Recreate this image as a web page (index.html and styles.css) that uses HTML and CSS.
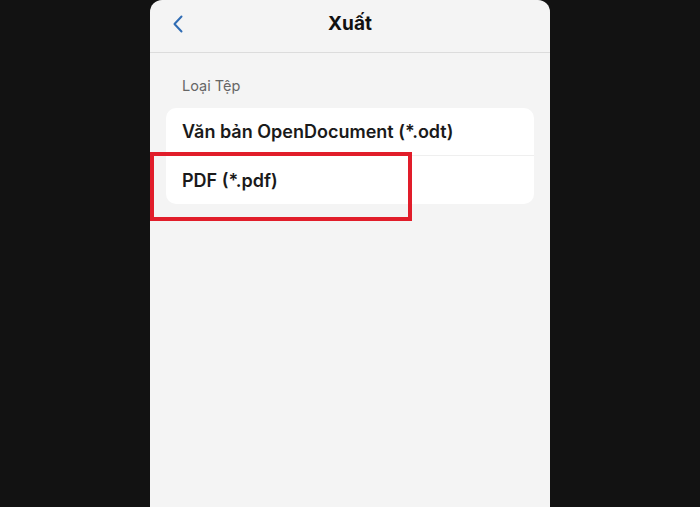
FILE: index.html
```html
<!DOCTYPE html>
<html lang="vi">
<head>
<meta charset="utf-8">
<link rel="stylesheet" href="styles.css">
</head>
<body>
<div class="phone">
  <header class="nav">
    <span class="back">
      <svg width="12" height="18" viewBox="0 0 12 18"><path d="M9.5 1.5 L2.5 9 L9.5 16.5" fill="none" stroke="#2f6cb4" stroke-width="2" stroke-linecap="round" stroke-linejoin="round"/></svg>
    </span>
    <h1 class="title">Xuất</h1>
    <span></span>
  </header>
  <main class="content">
    <div class="label">Loại Tệp</div>
    <div class="card">
      <div class="row">Văn bản OpenDocument (*.odt)</div>
      <div class="row">PDF (*.pdf)</div>
    </div>
  </main>
  <div class="highlight"></div>
</div>
</body>
</html>
```
FILE: styles.css
```css
html, body {
  margin: 0;
  height: 100%;
  background: #121212;
  overflow: hidden;
}
body {
  display: flex;
  justify-content: center;
  font-family: Inter, "Noto Sans", sans-serif;
}
.phone {
  position: relative;
  width: 400px;
  height: 100%;
  background: #f4f4f4;
  border-radius: 12px 12px 0 0;
}
.nav {
  height: 52px;
  border-bottom: 1px solid #dcdcdc;
  display: grid;
  grid-template-columns: 60px 1fr 60px;
  align-items: center;
}
.back {
  display: flex;
  padding-left: 22px;
  padding-bottom: 4px;
}
.title {
  margin: 0;
  text-align: center;
  font-size: 19px;
  font-weight: 700;
  color: #111;
  padding-bottom: 6px;
}
.content {
  padding: 0 16px;
}
.label {
  margin: 24px 0 13px 16px;
  font-size: 14.5px;
  line-height: 18px;
  color: #666;
}
.card {
  background: #fff;
  border-radius: 10px;
}
.row {
  height: 47px;
  display: flex;
  align-items: center;
  padding-left: 16px;
  font-size: 18px;
  font-weight: 600;
  color: #1a1a1a;
}
.row + .row {
  border-top: 1px solid #efefef;
  height: 48px;
}
.highlight {
  position: absolute;
  left: 0;
  top: 152px;
  width: 254px;
  height: 61px;
  border: 4px solid #e11d2a;
}
```
